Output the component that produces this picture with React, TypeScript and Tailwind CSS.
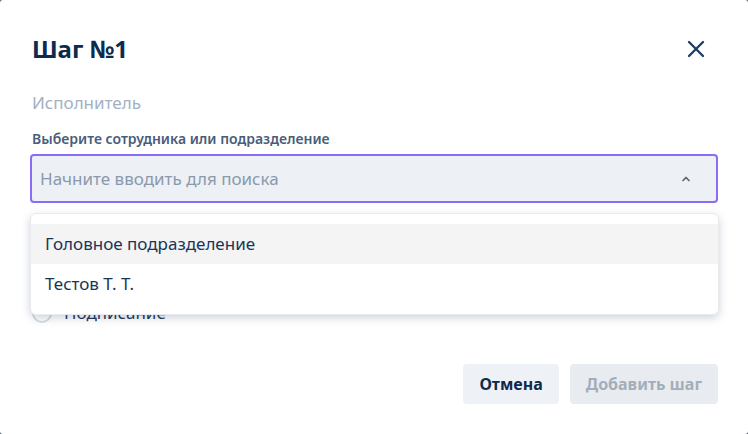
import { X, ChevronUp } from 'lucide-react'

function Radio({ label, checked }: { label: string; checked?: boolean }) {
  return (
    <div className="flex items-center gap-[12px] h-[22px]">
      <span
        className={`w-[20px] h-[20px] rounded-full border-2 ${checked ? 'border-[#8b6cf7]' : 'border-[#d5dbe3]'} flex items-center justify-center`}
      >
        {checked && <span className="w-[10px] h-[10px] rounded-full bg-[#8b6cf7]" />}
      </span>
      <span className="text-[17px] text-[#1b3556]">{label}</span>
    </div>
  )
}

export default function App() {
  const options = ['Головное подразделение', 'Тестов Т. Т.']

  return (
    <div className="w-[748px] h-[434px] bg-[#5b6470]" style={{ fontFamily: '"Noto Sans", "Open Sans", sans-serif' }}>
      <div className="w-full h-full bg-white rounded-[3px] flex flex-col px-[30px] pt-[34px] pb-[30px]">
        {/* Заголовок */}
        <div className="flex items-center justify-between h-[30px]">
          <h2 className="text-[24px] leading-[30px] font-bold text-[#0d2b4e] pl-[2px]">Шаг №1</h2>
          <button className="text-[#1e3d63] mr-[8px]">
            <X className="w-[28px] h-[28px]" strokeWidth={2} />
          </button>
        </div>

        <p className="mt-[28px] text-[17px] leading-[22px] text-[#a3b1c2] pl-[2px]">Исполнитель</p>

        <label className="mt-[15px] text-[14px] leading-[20px] font-semibold text-[#4a5d78] pl-[2px]">
          Выберите сотрудника или подразделение
        </label>

        {/* Поле поиска с выпадающим списком */}
        <div className="relative mt-[5px]">
          <div className="h-[49px] rounded-[4px] border-2 border-[#8b6cf7] bg-[#edf0f4] flex items-center justify-between pl-[8px] pr-[24px]">
            <span className="text-[17px] text-[#8a99ad]">Начните вводить для поиска</span>
            <ChevronUp className="w-[12px] h-[12px] text-[#5f646b]" strokeWidth={3.5} />
          </div>

          <div className="absolute z-10 left-0 right-[-1px] top-[59px] bg-white rounded-[6px] border border-[#e8eaee] shadow-[0_3px_8px_rgba(60,80,110,0.25)] py-[10px]">
            {options.map((o, i) => (
              <div
                key={o}
                className={`h-[40px] flex items-center px-[14px] text-[17px] text-[#1b3556] ${i === 0 ? 'bg-[#f4f4f4]' : ''}`}
              >
                {o}
              </div>
            ))}
          </div>
        </div>

        {/* Тип шага (под списком) */}
        <p className="mt-[25px] text-[14px] leading-[18px] font-semibold text-[#4a5d78] pl-[2px]">Тип шага</p>
        <div className="mt-[12px] flex flex-col gap-[22px] pl-[2px]">
          <Radio label="Согласование" checked />
          <Radio label="Подписание" />
        </div>

        {/* Кнопки */}
        <div className="mt-auto flex justify-end gap-[11px]">
          <button className="h-[40px] px-[16px] rounded-[4px] bg-[#eef2f6] text-[16px] font-bold text-[#0d2b4e]">
            Отмена
          </button>
          <button className="h-[40px] px-[16px] rounded-[4px] bg-[#e8ecf0] text-[16px] font-bold text-[#a3aebb]">
            Добавить шаг
          </button>
        </div>
      </div>
    </div>
  )
}
